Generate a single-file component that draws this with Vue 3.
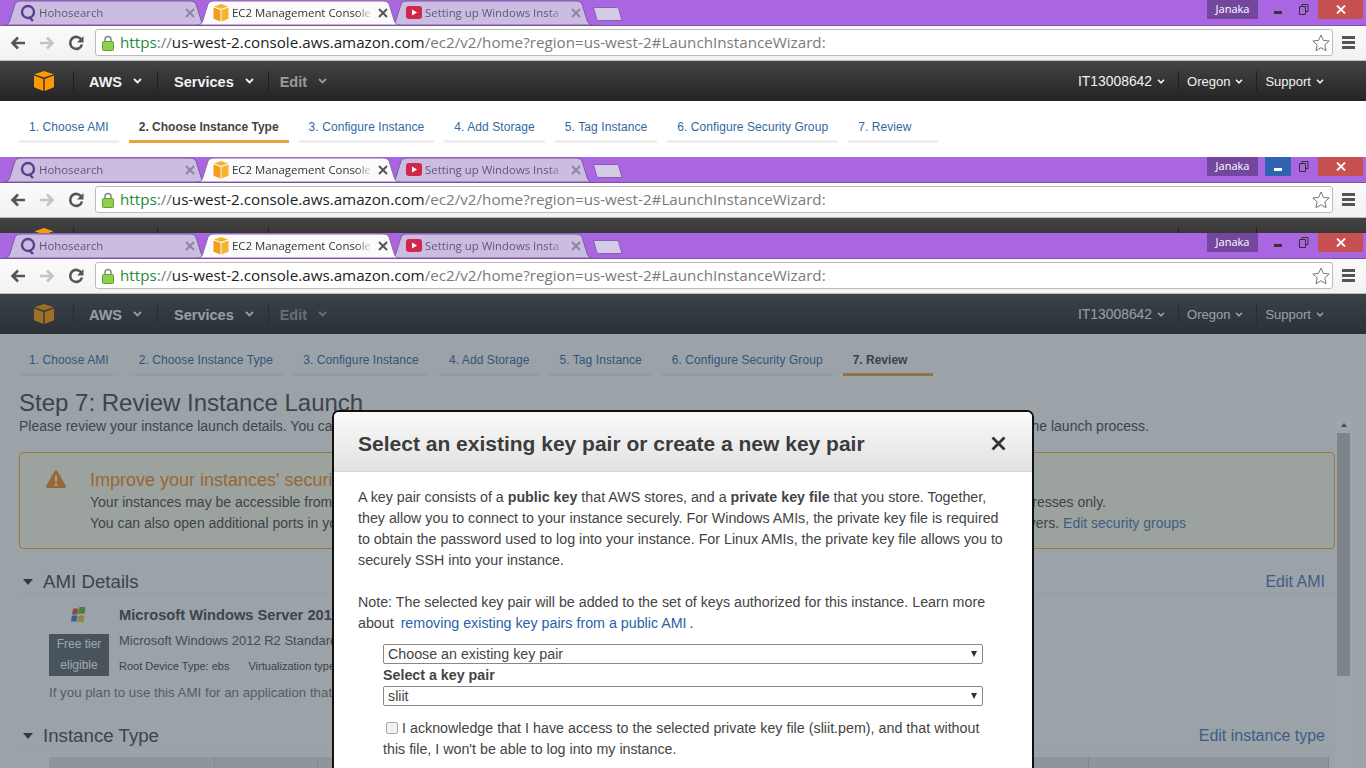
<template>
  <div class="screen">
    <section v-for="win in windows" :key="win.id" class="window" :class="win.id">
      <!-- tab strip -->
      <div class="tabstrip">
        <div v-for="tab in tabs" :key="tab.title" class="tab" :class="{ active: tab.active }">
          <svg class="tab-shape" width="203" height="25" viewBox="0 0 203 25">
            <path d="M0 25C4 25 5 23 6 20L11 4C12 2 14 1 17 1H186C189 1 191 2 192 4L197 20C198 23 199 25 203 25Z" />
          </svg>
          <svg v-if="tab.icon === 'search'" class="favicon" width="16" height="18" viewBox="0 0 16 18">
            <circle cx="8" cy="8" r="6" fill="none" stroke="#5a3f8c" stroke-width="2.4" />
            <path d="M9 13l4 4" stroke="#5a3f8c" stroke-width="2.4" />
          </svg>
          <svg v-else-if="tab.icon === 'aws'" class="favicon" width="16" height="18" viewBox="0 0 16 18">
            <path d="M8 0l7 2.5L8 5 1 2.500z" fill="#f7b32b" />
            <path d="M0.500 3.600l7 2.500V17.500l-7-2.800z" fill="#f29d1c" />
            <path d="M15.500 3.600l-7 2.500V17.500l7-2.800z" fill="#f7b32b" />
          </svg>
          <svg v-else class="favicon" width="16" height="18" viewBox="0 0 16 18">
            <rect x="0" y="2" width="16" height="13" rx="3" fill="#d1274b" />
            <path d="M6 5.500l5 3-5 3z" fill="#fff" />
          </svg>
          <span class="tab-title">{{ tab.title }}</span>
          <svg class="tab-close" width="10" height="10" viewBox="0 0 10 10">
            <path d="M1 1l8 8M9 1l-8 8" :stroke="tab.active ? '#555' : '#8c8799'" stroke-width="2" />
          </svg>
        </div>
        <svg class="newtab" width="30" height="14" viewBox="0 0 30 14">
          <path d="M0.500 0.500H23C25 0.500 25.500 1 26 3L29 13.500H6C4.500 13.500 4 13 3.500 11.500Z" fill="#d5cae8" stroke="#8262ad" />
        </svg>
        <div class="win-controls">
          <span class="profile">Janaka</span>
          <span class="win-btn" :class="{ hot: win.hot }"><i class="min-glyph"></i></span>
          <span class="win-btn">
            <svg width="10" height="11" viewBox="0 0 10 11">
              <path d="M3 2.500V0.500H9V7.500H7M0.500 2.500H6.500V10.500H0.500Z" fill="none" stroke="#333" />
            </svg>
          </span>
          <span class="win-close">
            <svg width="10" height="9" viewBox="0 0 10 9">
              <path d="M1 .5l8 8M9 .5l-8 8" stroke="#fff" stroke-width="1.800" />
            </svg>
          </span>
        </div>
      </div>

      <!-- toolbar -->
      <div class="toolbar">
        <svg class="tool" width="16" height="14" viewBox="0 0 16 14">
          <path d="M15 7H3M8 1.500L2.500 7 8 12.500" fill="none" stroke="#555" stroke-width="2.600" />
        </svg>
        <svg class="tool" width="16" height="14" viewBox="0 0 16 14">
          <path d="M1 7H13M8 1.500L13.500 7 8 12.500" fill="none" stroke="#c4c4c4" stroke-width="2.600" />
        </svg>
        <svg class="tool" width="16" height="16" viewBox="0 0 16 16">
          <path d="M13.500 5A6 6 0 1 0 14 9.500" fill="none" stroke="#555" stroke-width="2.600" />
          <path d="M15.500 1v6.500H9z" fill="#555" />
        </svg>
        <div class="omnibox">
          <svg class="lock" width="12" height="16" viewBox="0 0 12 16">
            <path d="M3 7V4.500a3 3 0 0 1 6 0V7" fill="none" stroke="#888" stroke-width="1.500" />
            <rect x="0.500" y="6.500" width="11" height="9" rx="1" fill="#8fd14f" stroke="#5fa02f" />
          </svg>
          <span class="url"><span class="scheme">https</span><span class="dim">://</span>us-west-2.console.aws.amazon.com<span class="dim">/ec2/v2/home?region=us-west-2#LaunchInstanceWizard:</span></span>
          <svg class="star" width="18" height="18" viewBox="0 0 18 18">
            <path d="M9 1l2.400 5.400 5.800.6-4.400 3.900 1.300 5.800L9 13.700l-5.100 3 1.300-5.800L.8 7l5.800-.6z" fill="#fff" stroke="#777" />
          </svg>
        </div>
        <div class="menu"><i></i><i></i><i></i></div>
      </div>

      <div class="viewport">
        <!-- console nav -->
        <nav class="topnav">
          <div class="logo-cell">
            <svg width="20" height="20" viewBox="0 0 20 20">
              <path d="M10 0l9.500 3.200L10 6.600 .5 3.200z" fill="#f90" />
              <path d="M0 4.500l9.300 3.400V20L0 16.300z" fill="#f90" />
              <path d="M20 4.500l-9.300 3.400V20L20 16.300z" fill="#f90" />
            </svg>
          </div>
          <div v-for="item in leftNav" :key="item.label" class="nav-item" :class="{ muted: item.muted }">
            <span>{{ item.label }}</span>
            <svg width="9" height="6" viewBox="0 0 9 6"><path d="M1 1l3.500 3.500L8 1" fill="none" stroke="currentColor" stroke-width="1.800" /></svg>
          </div>
          <div class="nav-right">
            <div v-for="item in rightNav" :key="item" class="nav-item small">
              <span>{{ item }}</span>
              <svg width="8" height="5" viewBox="0 0 8 5"><path d="M1 .8l3 3 3-3" fill="none" stroke="currentColor" stroke-width="1.600" /></svg>
            </div>
          </div>
        </nav>

        <ul v-if="win.step" class="steps">
          <li v-for="(step, i) in steps" :key="step" :class="{ current: i + 1 === win.step }">{{ i + 1 }}. {{ step }}</li>
        </ul>

        <div v-if="win.id === 'w3'" class="page">
          <main class="content">
            <h1>Step 7: Review Instance Launch</h1>
            <p class="intro">
              <span>Please review your instance launch details. You can</span>
              <span>the launch process.</span>
            </p>

            <div class="alert">
              <svg class="warn" width="20" height="18" viewBox="0 0 20 18">
                <path d="M10 .5c.8 0 1.300.4 1.700 1l8 14c.6 1.200 0 2.500-1.500 2.500H1.800C.3 18-.3 16.700.3 15.500l8-14c.4-.6.9-1 1.700-1z" fill="#f08a24" />
                <path d="M8.800 5.500h2.400l-.4 7H9.200zM8.800 13.800h2.400V16H8.800z" fill="#fdfbe9" />
              </svg>
              <div class="alert-text">
                <h2>Improve your instances' security</h2>
                <p><span>Your instances may be accessible from</span><span class="short">addresses only.</span></p>
                <p><span>You can also open additional ports in your</span><span>servers. <a>Edit security groups</a></span></p>
              </div>
            </div>

            <div class="section-head first">
              <h3><i class="tri"></i>AMI Details</h3>
              <a>Edit AMI</a>
            </div>
            <div class="ami">
              <div class="ami-side">
                <svg width="20" height="18" viewBox="0 0 18 18">
                  <path d="M3 2c2-1 3.500-.8 5.200 0L7.400 8C5.700 7.200 4 7 2 8z" fill="#d9533a" />
                  <path d="M9 .5c2-1 4-.8 6.500 0L14.500 7c-2.200-.8-4-.8-6.300 0z" fill="#6fae3c" />
                  <path d="M1.800 9c2-1 3.700-.9 5.400 0L6.300 15c-1.700-.9-3.500-1-5.300 0z" fill="#3f7fd0" />
                  <path d="M8 9c2.200-.9 4.200-.9 6.400 0l-1 6.500c-2-.9-4-.9-6.300 0z" fill="#eec13a" />
                </svg>
                <div class="free-tier">Free tier<br />eligible</div>
              </div>
              <div class="ami-info">
                <strong>Microsoft Windows Server 2012 R2 Base</strong>
                <p class="ami-desc">Microsoft Windows 2012 R2 Standard</p>
                <p class="ami-meta"><span>Root Device Type: ebs</span><span>Virtualization type: hvm</span></p>
              </div>
            </div>
            <p class="ami-note">If you plan to use this AMI for an application that</p>

            <div class="section-head second">
              <h3><i class="tri"></i>Instance Type</h3>
              <a>Edit instance type</a>
            </div>
            <div class="table-head"><i></i><i></i><i></i><i></i></div>
          </main>
          <div class="scrollbar">
            <span class="scroll-up"></span>
            <span class="scroll-thumb"></span>
          </div>
        </div>

        <div v-if="win.id === 'w3'" class="backdrop"></div>

        <div v-if="win.id === 'w3'" class="modal">
          <header class="modal-head">
            <h2>Select an existing key pair or create a new key pair</h2>
            <svg width="15" height="15" viewBox="0 0 15 15">
              <path d="M1.500 1.500l12 12M13.500 1.500l-12 12" stroke="#333" stroke-width="2.800" />
            </svg>
          </header>
          <div class="modal-body">
            <p>A key pair consists of a <b>public key</b> that AWS stores, and a <b>private key file</b> that you store. Together, they allow you to connect to your instance securely. For Windows AMIs, the private key file is required to obtain the password used to log into your instance. For Linux AMIs, the private key file allows you to securely SSH into your instance.</p>
            <p class="note">Note: The selected key pair will be added to the set of keys authorized for this instance. Learn more about <a class="spaced">removing existing key pairs from a public AMI</a>.</p>
            <div class="form">
              <div class="select"><span>Choose an existing key pair</span><i></i></div>
              <label class="select-label">Select a key pair</label>
              <div class="select"><span>sliit</span><i></i></div>
              <p class="ack"><span class="ack-first"><span class="check"></span>I acknowledge that I have access to the selected private key file (sliit.pem), and that without</span>this file, I won't be able to log into my instance.</p>
            </div>
          </div>
        </div>
      </div>
    </section>
  </div>
</template>

<script setup>
const windows = [
  { id: 'w1', step: 2, hot: false },
  { id: 'w2', step: 0, hot: true },
  { id: 'w3', step: 7, hot: false },
];

const tabs = [
  { title: 'Hohosearch', icon: 'search' },
  { title: 'EC2 Management Console', icon: 'aws', active: true },
  { title: 'Setting up Windows Insta', icon: 'yt' },
];

const leftNav = [
  { label: 'AWS' },
  { label: 'Services' },
  { label: 'Edit', muted: true },
];
const rightNav = ['IT13008642', 'Oregon', 'Support'];

const steps = [
  'Choose AMI',
  'Choose Instance Type',
  'Configure Instance',
  'Add Storage',
  'Tag Instance',
  'Configure Security Group',
  'Review',
];
</script>

<style scoped>
.screen {
  width: 1366px;
  height: 768px;
  overflow: hidden;
  font-family: "Liberation Sans", Arial, sans-serif;
  background: #fff;
}

.window {
  overflow: hidden;
  display: flex;
  flex-direction: column;
}
.w1 { height: 157px; }
.w2 { height: 76px; }
.w3 { height: 535px; }

/* only a sliver of the nav shows in the middle window, labels sit below the fold */
.w2 .nav-item span,
.w2 .nav-item svg { visibility: hidden; }

/* browser chrome */
.tabstrip {
  height: 25px;
  flex: none;
  display: flex;
  padding-left: 4px;
  background: #a966e0;
  position: relative;
}
.tab {
  width: 203px;
  height: 25px;
  margin-right: -10px;
  padding-left: 16px;
  box-sizing: border-box;
  display: flex;
  align-items: center;
  position: relative;
  font: 11.400px "Open Sans", sans-serif;
  color: #5f5a6c;
}
.tab:nth-child(3) { margin-right: 0; }
.tab.active {
  z-index: 2;
  color: #333;
}
.tab-shape {
  position: absolute;
  left: 0;
  top: 0;
  fill: #cbbce2;
  stroke: #7c5a9f;
}
.tab.active .tab-shape {
  fill: #fbfbfb;
  stroke: #8a6cab;
}
.favicon {
  position: relative;
  flex: none;
}
.tab-title {
  position: relative;
  width: 141px;
  margin-left: 3px;
  white-space: nowrap;
  -webkit-mask-image: linear-gradient(to right, #000 88%, transparent);
  mask-image: linear-gradient(to right, #000 88%, transparent);
}
.tab-close {
  position: relative;
  margin-left: 5px;
}
.newtab {
  margin-top: 7px;
  flex: none;
}
.win-controls {
  margin-left: auto;
  margin-right: 3px;
  display: flex;
  align-items: flex-start;
  height: 19px;
}
.profile {
  width: 51px;
  height: 19px;
  margin-right: 7px;
  background: #74479f;
  color: #fff;
  font: 11px/18px "Open Sans", sans-serif;
  text-align: center;
}
.win-btn {
  width: 26px;
  height: 19px;
  display: flex;
  align-items: center;
  justify-content: center;
}
.win-btn.hot { background: #2f62b0; }
.win-btn.hot .min-glyph { background: #fff; }
.min-glyph {
  width: 8px;
  height: 3px;
  margin-top: 6px;
  background: #333;
}
.win-close {
  width: 45px;
  height: 19px;
  margin-left: 1px;
  background: #c75050;
  display: flex;
  align-items: center;
  justify-content: center;
}

.toolbar {
  height: 36px;
  flex: none;
  box-sizing: border-box;
  padding: 4px 11px 5px 10px;
  display: flex;
  align-items: center;
  background: linear-gradient(#fbfbfb, #f2f2f2);
  border-top: 1px solid #7d50a8;
  border-bottom: 1px solid #bdbdbd;
}
.tool {
  flex: none;
  margin-right: 13px;
}
.omnibox {
  flex: 1;
  height: 27px;
  margin-left: -2px;
  box-sizing: border-box;
  padding: 0 2px 0 6px;
  display: flex;
  align-items: center;
  background: #fff;
  border: 1px solid #bbb;
  border-radius: 3px;
}
.lock { flex: none; }
.url {
  margin-left: 6px;
  padding-bottom: 2px;
  font: 15.200px "Open Sans", sans-serif;
  color: #222;
  white-space: nowrap;
}
.scheme { color: #1f8a3c; }
.dim { color: #7b7b7b; }
.star { margin-left: auto; }
.menu {
  width: 13px;
  margin-left: 9px;
  flex: none;
  display: flex;
  flex-direction: column;
  gap: 2px;
}
.menu i {
  height: 3px;
  background: #555;
}

/* console */
.viewport {
  flex: 1;
  min-height: 0;
  position: relative;
  overflow: hidden;
}
.topnav {
  height: 40px;
  display: flex;
  align-items: center;
  background: linear-gradient(#444, #232323);
  color: #f2f2f2;
}
.logo-cell {
  width: 73px;
  padding-left: 34px;
  box-sizing: border-box;
  height: 20px;
}
.nav-item {
  height: 20px;
  padding: 0 15px;
  display: flex;
  align-items: center;
  gap: 11px;
  border-left: 1px solid #1e1e1e;
  font-size: 14.500px;
  font-weight: 700;
}
.nav-item span { margin-top: 1px; }
.nav-item:nth-child(3) { padding: 0 14px 0 16px; }
.nav-item.muted {
  padding-left: 11px;
  color: #9a9a9a;
}
.nav-right {
  margin-left: auto;
  margin-right: 29px;
  display: flex;
}
.nav-item.small {
  padding: 0 13px 0 8px;
  gap: 5px;
  font-size: 13px;
  font-weight: 400;
}
.nav-item.small span { margin-top: 0; }
.nav-item.small:first-child { border-left: 0; }
.nav-item.small:first-child span { font-size: 13.900px; }

.steps {
  height: 56px;
  margin: 0;
  padding: 0 0 0 19px;
  box-sizing: border-box;
  list-style: none;
  display: flex;
  gap: 10px;
  background: #fff;
}
.w3 .steps { background: #fafafa; }
.steps li {
  height: 42px;
  min-width: 90px;
  padding: 18px 10px 0;
  box-sizing: border-box;
  font-size: 12px;
  line-height: 17px;
  letter-spacing: 0.08px;
  color: #33689f;
  white-space: nowrap;
  border-bottom: 3px solid #eee;
}
.steps li.current {
  font-weight: 700;
  letter-spacing: 0;
  color: #444;
  border-bottom-color: #e8a33d;
}

.page {
  display: flex;
  padding-left: 19px;
  background: #fafafa;
  color: #484848;
}
.content {
  width: 1316px;
  flex: none;
}
h1 {
  margin: 0;
  font-size: 24px;
  font-weight: 400;
  line-height: 26px;
}
.intro {
  margin: 0;
  display: flex;
  justify-content: space-between;
  font-size: 14px;
  line-height: 20px;
  padding-right: 186px;
}
.alert {
  height: 97px;
  margin-top: 16px;
  box-sizing: border-box;
  display: flex;
  padding: 17px 0 0 26px;
  background: #fbfae7;
  border: 1px solid #ffa830;
  border-radius: 4px;
}
.warn { flex: none; }
.alert-text {
  flex: 1;
  margin-left: 24px;
  padding-right: 148px;
}
.alert-text h2 {
  margin: 0 0 1px;
  font-size: 18px;
  font-weight: 400;
  line-height: 21px;
  color: #f08a24;
}
.alert-text p {
  margin: 0;
  display: flex;
  justify-content: space-between;
  font-size: 14px;
  line-height: 21px;
}
.alert-text .short { padding-right: 80px; }
.content a { color: #4a78b8; }
.modal a { color: #2a5fa8; }

.section-head {
  height: 34px;
  box-sizing: border-box;
  display: flex;
  align-items: center;
  justify-content: space-between;
  padding: 13px 10px 0 4px;
  border-bottom: 1px solid #f0f0f0;
}
.section-head.first { margin-top: 10px; }
.section-head.second { margin-top: 10px; }
.section-head h3 {
  margin: 0;
  display: flex;
  align-items: center;
  font-size: 18.700px;
  font-weight: 400;
}
.section-head a { font-size: 16px; }
.tri {
  width: 0;
  height: 0;
  margin-right: 10px;
  border-left: 5.500px solid transparent;
  border-right: 5.500px solid transparent;
  border-top: 6px solid #333;
}

.ami {
  display: flex;
  padding: 14px 0 0 30px;
}
.ami-side {
  width: 60px;
  flex: none;
  display: flex;
  flex-direction: column;
  align-items: center;
}
.free-tier {
  width: 60px;
  height: 42px;
  margin-top: 9px;
  background: #5f656b;
  color: #fff;
  font-size: 12px;
  line-height: 21px;
  text-align: center;
}
.ami-info {
  margin-left: 10px;
  margin-top: -1px;
}
.ami-info strong {
  display: block;
  font-size: 14.700px;
  line-height: 18px;
}
.ami-desc {
  margin: 9px 0 0;
  font-size: 13px;
  line-height: 16px;
  color: #555;
}
.ami-meta {
  margin: 9px 0 0;
  font-size: 11px;
  line-height: 16px;
  display: flex;
  gap: 19px;
  color: #444;
}
.ami-note {
  margin: 7px 0 0 30px;
  font-size: 13.300px;
  line-height: 20px;
  color: #777;
}
.table-head {
  height: 30px;
  margin: 10px 6px 0 30px;
  display: grid;
  grid-template-columns: 166px 103px 771px 1fr;
  background: #e0e0e0;
}
.table-head i { border-right: 1px solid #c8c8c8; }

.scrollbar {
  width: 17px;
  flex: none;
  margin-top: 26px;
  background: #fff;
  display: flex;
  flex-direction: column;
  align-items: center;
}
.scroll-up {
  width: 0;
  height: 0;
  margin: 7px 0 6px;
  border-left: 3.500px solid transparent;
  border-right: 3.500px solid transparent;
  border-bottom: 4px solid #555;
}
.scroll-thumb {
  width: 13px;
  height: 243px;
  background: #c1c1c1;
}

.backdrop {
  position: absolute;
  inset: 0;
  background: rgba(49, 64, 77, 0.47);
}

.modal {
  position: absolute;
  left: 332px;
  top: 116px;
  width: 702px;
  height: 420px;
  box-sizing: border-box;
  background: #fff;
  border: 2px solid #111;
  border-radius: 7px;
  color: #444;
}
.modal-head {
  height: 60px;
  box-sizing: border-box;
  padding: 4px 26px 0 24px;
  display: flex;
  align-items: center;
  justify-content: space-between;
  background: linear-gradient(#fafafa, #e2e2e2);
  border-bottom: 1px solid #d5d5d5;
  border-radius: 5px 5px 0 0;
}
.modal-head h2 {
  margin: 0;
  font-size: 21px;
  font-weight: 700;
  color: #3c3c3c;
}
.modal-body {
  padding: 15px 24px 0 24px;
  font-size: 14.250px;
  line-height: 21px;
}
.modal-body p { margin: 0; }
.modal-body .note { margin-top: 21px; }
.spaced { margin: 0 3px; }
.form {
  margin: 10px 25px 0 25px;
}
.select {
  height: 20px;
  box-sizing: border-box;
  padding: 0 5px 0 4px;
  display: flex;
  align-items: center;
  justify-content: space-between;
  border: 1px solid #888;
  border-radius: 2px;
  line-height: 18px;
}
.select i {
  width: 0;
  height: 0;
  border-left: 3px solid transparent;
  border-right: 3px solid transparent;
  border-top: 6px solid #333;
}
.select-label {
  display: block;
  font-weight: 700;
  line-height: 22px;
}
.ack { margin-top: 12px !important; }
.ack-first {
  display: block;
  word-spacing: 0.1px;
  white-space: nowrap;
}
.check {
  display: inline-block;
  width: 12px;
  height: 12px;
  margin: 0 4px 0 3px;
  vertical-align: -1px;
  box-sizing: border-box;
  background: #f2f2f2;
  border: 1px solid #aaa;
  border-radius: 2px;
}
</style>
